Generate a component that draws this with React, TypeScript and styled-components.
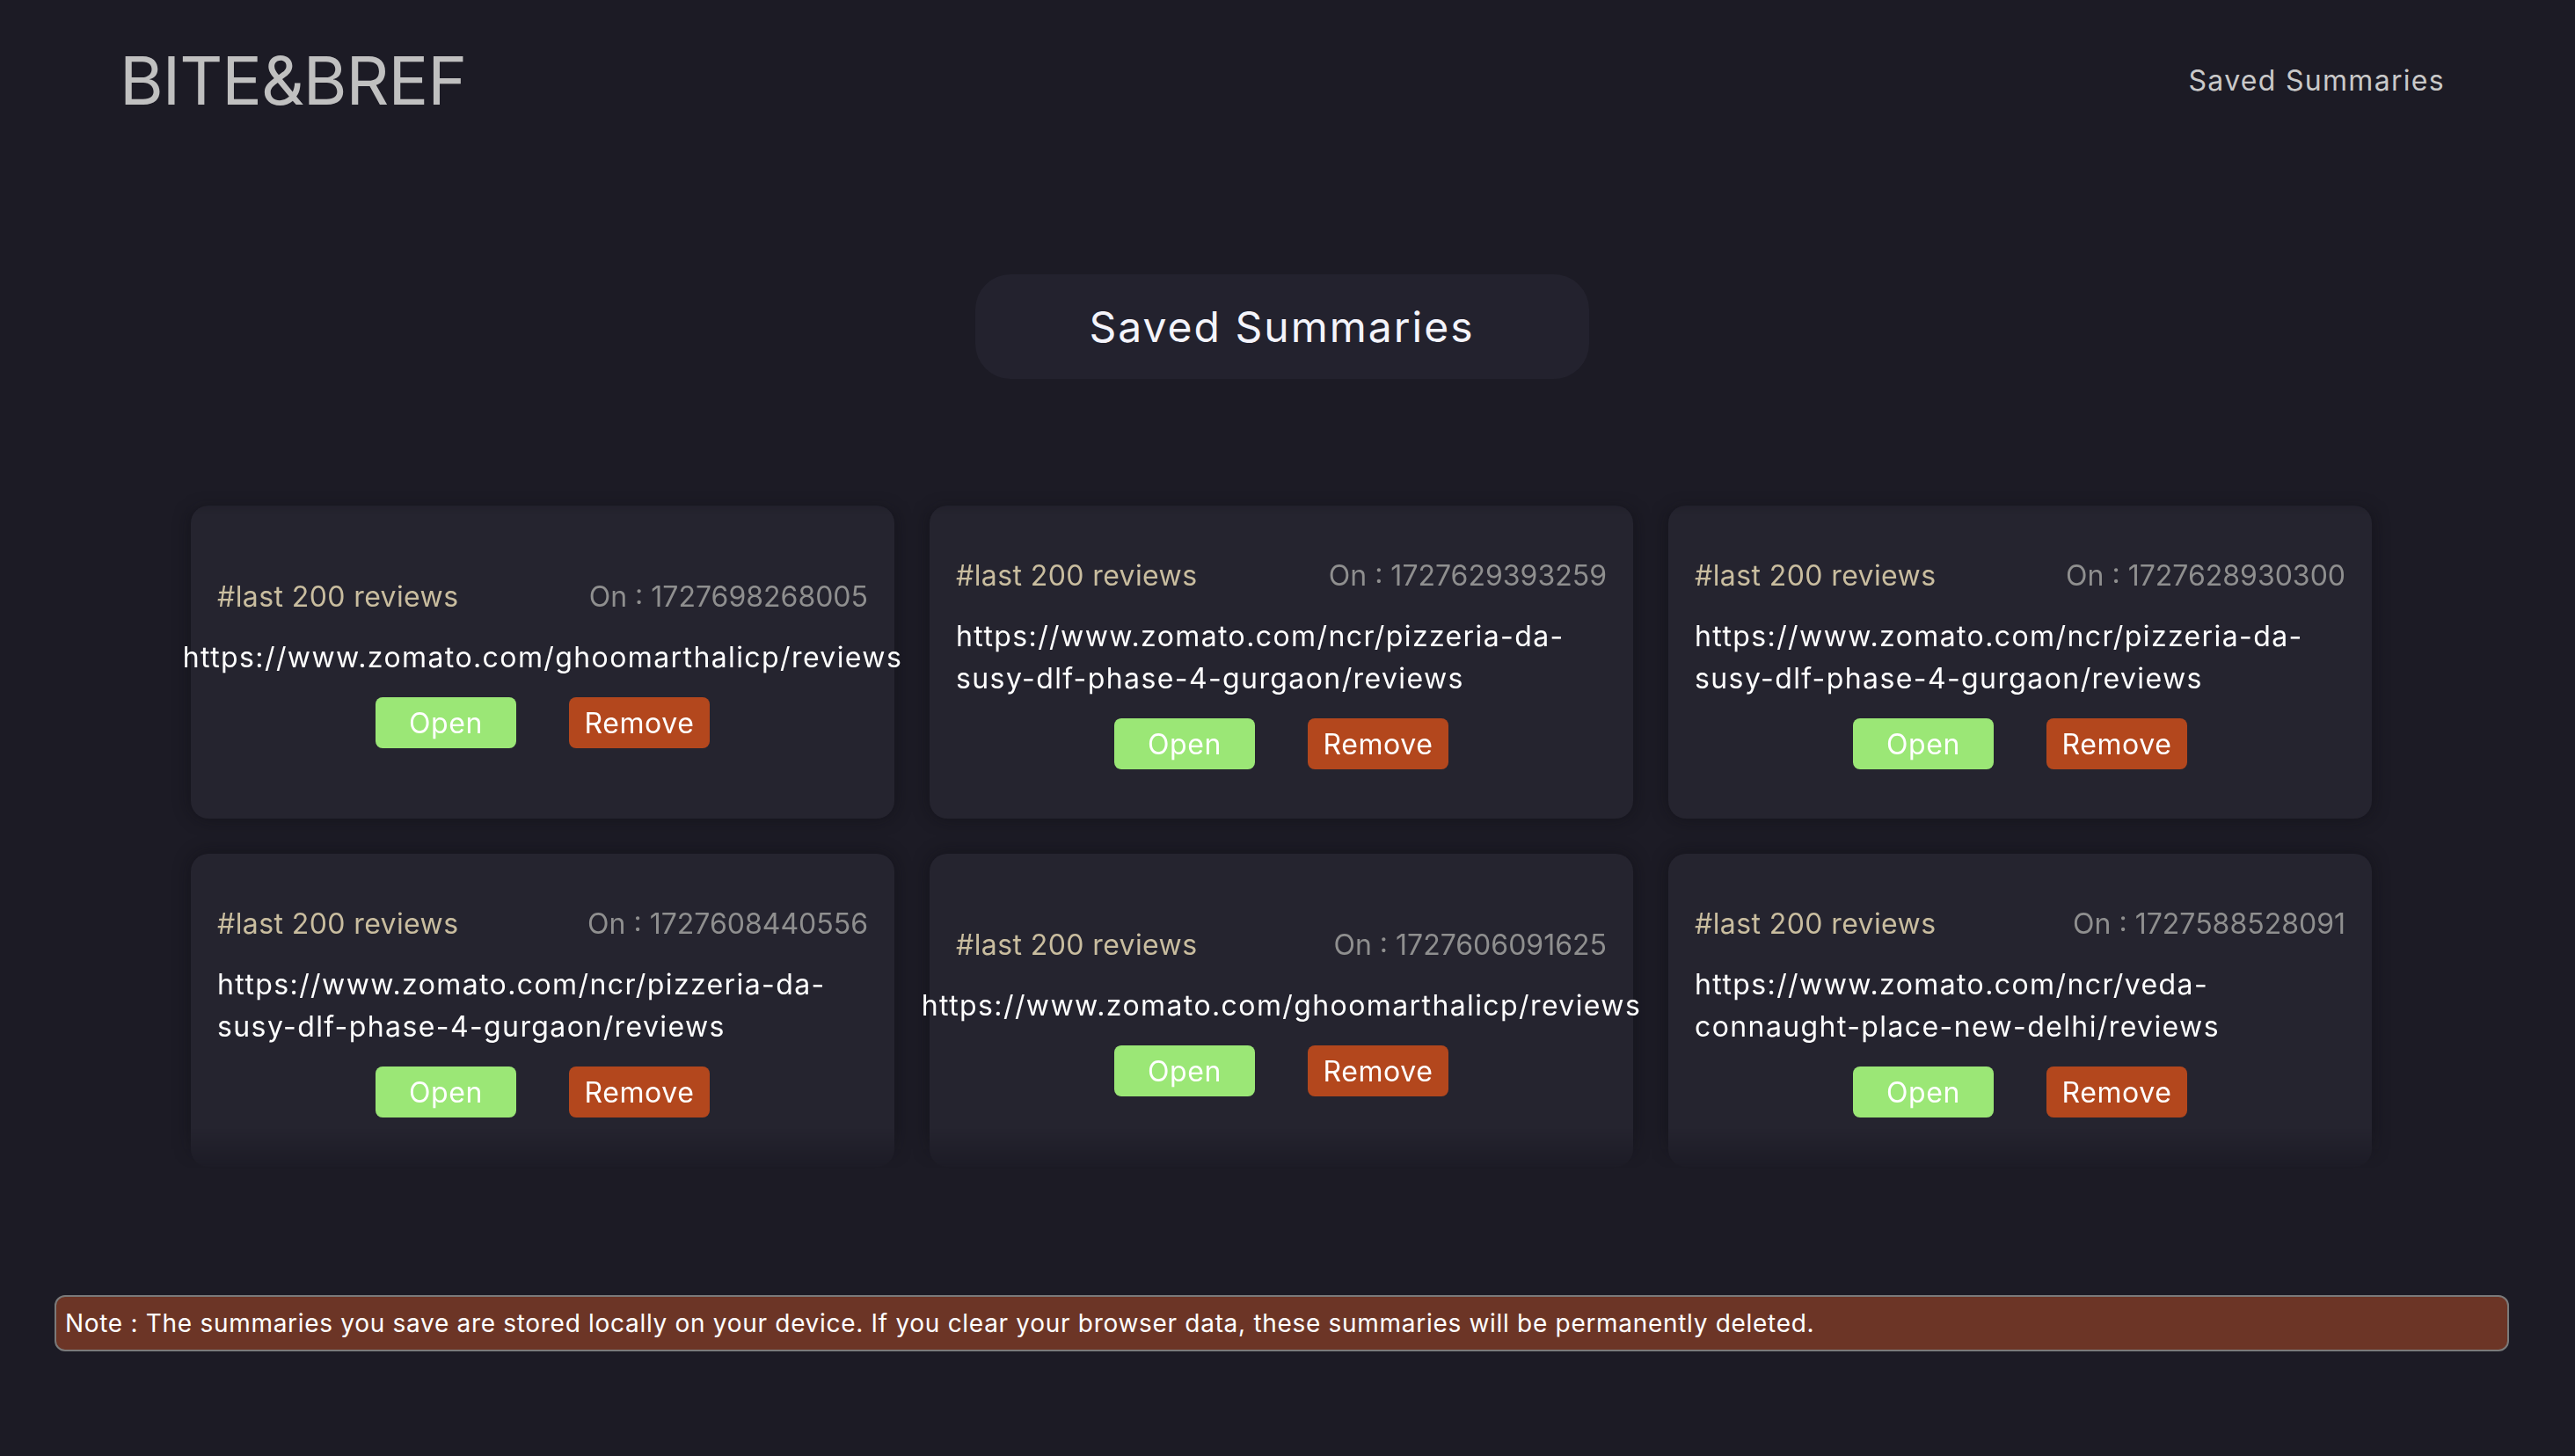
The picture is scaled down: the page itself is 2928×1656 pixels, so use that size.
import styled, { createGlobalStyle } from 'styled-components';

const GlobalStyle = createGlobalStyle`
  * { box-sizing: border-box; }
  html, body {
    margin: 0;
    padding: 0;
    background-color: #1c1b25;
  }
  body {
    font-family: "Inter", "Open Sans", sans-serif;
    color: #ffffff;
  }
`;

const Page = styled.div`
  width: calc(100% - 13px);
  min-height: 100vh;
  background-color: #1c1b25;
`;

const Header = styled.header`
  height: 182px;
  padding: 0 135px 0 136px;
  display: flex;
  align-items: center;
  justify-content: space-between;
`;

const Logo = styled.h1`
  margin: 0;
  font-family: "Inter", sans-serif;
  font-weight: 400;
  font-size: 76px;
  letter-spacing: -1px;
  color: #c0c0c0;
`;

const NavLink = styled.a`
  font-size: 32px;
  letter-spacing: 1.3px;
  color: #c9c9c9;
  text-decoration: none;
  cursor: pointer;
`;

const TitleWrap = styled.div`
  display: flex;
  justify-content: center;
  margin-top: 130px;
`;

const TitlePill = styled.h2`
  margin: 0;
  width: 698px;
  height: 119px;
  display: flex;
  align-items: center;
  justify-content: center;
  border-radius: 40px;
  background-color: #23222e;
  font-size: 48px;
  font-weight: 400;
  letter-spacing: 2px;
  color: #f4f4fb;
`;

const ListWrap = styled.section`
  margin-top: 124px;
  padding: 20px 217px 0;
  height: 775px;
  overflow: hidden;
  -webkit-mask-image: linear-gradient(to bottom, transparent 0, black 30px, black 94%, transparent 100%);
  mask-image: linear-gradient(to bottom, transparent 0, black 30px, black 94%, transparent 100%);
`;

const Grid = styled.div`
  display: grid;
  grid-template-columns: repeat(3, 800px);
  gap: 40px;
`;

const Card = styled.article`
  display: flex;
  flex-direction: column;
  align-items: center;
  justify-content: center;
  min-height: 355px;
  padding: 56px 30px;
  border-radius: 20px;
  background-color: #25242f;
  box-shadow: 0 0 20px rgba(10, 10, 16, 0.45);
`;

const CardHead = styled.div`
  width: 100%;
  display: flex;
  justify-content: space-between;
  align-items: center;
  font-size: 32px;
  line-height: 48px;
  margin-bottom: 21px;
`;

const Tag = styled.span`
  color: #c9bd9f;
  letter-spacing: 0.4px;
`;

const Stamp = styled.span`
  color: #8f8f8f;
`;

const Url = styled.p`
  margin: 0 0 21px;
  font-size: 32px;
  line-height: 48px;
  letter-spacing: 1.4px;
  color: #ffffff;
  text-align: left;
`;

const Actions = styled.div`
  display: flex;
  gap: 60px;
`;

const ActionButton = styled.button<{ $variant: 'open' | 'remove' }>`
  width: 160px;
  height: 58px;
  padding: 0;
  border: none;
  border-radius: 8px;
  font-family: inherit;
  font-size: 32px;
  letter-spacing: 0.6px;
  color: #ffffff;
  cursor: pointer;
  background-color: ${p => (p.$variant === 'open' ? '#9be776' : '#b3471d')};
`;

const Note = styled.div`
  margin: 143px 62px 0;
  height: 64px;
  display: flex;
  align-items: center;
  padding: 0 10px;
  border: 2px solid #7a7a7a;
  border-radius: 12px;
  background-color: #6c3526;
  font-size: 28px;
  letter-spacing: 0.7px;
  color: #ffffff;
`;

const summaries = [
  { id: 1, on: '1727698268005', url: 'https://www.zomato.com/ghoomarthalicp/reviews' },
  { id: 2, on: '1727629393259', url: 'https://www.zomato.com/ncr/pizzeria-da-susy-dlf-phase-4-gurgaon/reviews' },
  { id: 3, on: '1727628930300', url: 'https://www.zomato.com/ncr/pizzeria-da-susy-dlf-phase-4-gurgaon/reviews' },
  { id: 4, on: '1727608440556', url: 'https://www.zomato.com/ncr/pizzeria-da-susy-dlf-phase-4-gurgaon/reviews' },
  { id: 5, on: '1727606091625', url: 'https://www.zomato.com/ghoomarthalicp/reviews' },
  { id: 6, on: '1727588528091', url: 'https://www.zomato.com/ncr/veda-connaught-place-new-delhi/reviews' },
];

export default function App() {
  return (
    <Page>
      <GlobalStyle />
      <Header>
        <Logo>BITE&amp;BREF</Logo>
        <NavLink>Saved Summaries</NavLink>
      </Header>

      <TitleWrap>
        <TitlePill>Saved Summaries</TitlePill>
      </TitleWrap>

      <ListWrap>
        <Grid>
          {summaries.map(item => (
            <Card key={item.id}>
              <CardHead>
                <Tag>#last 200 reviews</Tag>
                <Stamp>On : {item.on}</Stamp>
              </CardHead>
              <Url>{item.url}</Url>
              <Actions>
                <ActionButton $variant="open">Open</ActionButton>
                <ActionButton $variant="remove">Remove</ActionButton>
              </Actions>
            </Card>
          ))}
        </Grid>
      </ListWrap>

      <Note>
        Note : The summaries you save are stored locally on your device. If you clear your browser data, these summaries will be permanently deleted.
      </Note>
    </Page>
  );
}
